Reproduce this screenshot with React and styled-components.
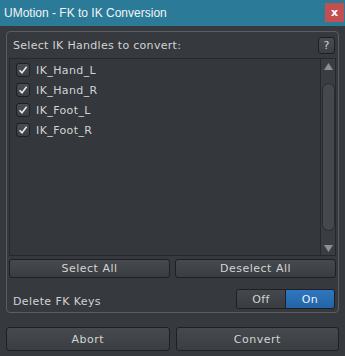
import React from "react"
import styled, { createGlobalStyle } from "styled-components"

const Global = createGlobalStyle`
  html, body {
    margin: 0;
    padding: 0;
    background: #36393d;
  }
  * { box-sizing: border-box; }
`

const Window = styled.div`
  width: 345px;
  height: 356px;
  background: #36393d;
  font-family: "DejaVu Sans", Verdana, sans-serif;
  color: #d2d4d6;
  display: flex;
  flex-direction: column;
`

const TitleBar = styled.div`
  height: 26px;
  background: #2b7b98;
  display: flex;
  align-items: flex-start;
  justify-content: space-between;
  padding: 3px 1px 0 4px;
`

const Title = styled.div`
  font-family: "Liberation Sans", Arial, sans-serif;
  font-size: 12px;
  line-height: 20px;
  color: #f2f4f5;
`

const CloseButton = styled.div`
  width: 19px;
  height: 19px;
  background: #c44f51;
  color: #fff;
  font-size: 11px;
  font-weight: bold;
  display: flex;
  align-items: center;
  justify-content: center;
  line-height: 1;
`

const Body = styled.div`
  flex: 1;
  display: flex;
  flex-direction: column;
  padding: 5px 6px 0 6px;
`

const Panel = styled.div`
  height: 282px;
  border: 1px solid #5a5d62;
  border-radius: 4px;
  padding: 3px 2px 0 2px;
  display: flex;
  flex-direction: column;
`

const PanelHeader = styled.div`
  display: flex;
  justify-content: space-between;
  align-items: center;
  height: 20px;
  padding-left: 4px;
  font-size: 11px;
  letter-spacing: 0.3px;
`

const HelpButton = styled.div`
  width: 17px;
  height: 17px;
  border: 1px solid #1e2023;
  border-radius: 3px;
  background: linear-gradient(#494c50, #3c3f43);
  font-size: 11px;
  display: flex;
  align-items: center;
  justify-content: center;
  margin-right: 1px;
`

const List = styled.div`
  margin-top: 3px;
  height: 198px;
  border: 1px solid #26282b;
  background: #34373b;
  display: flex;
`

const Items = styled.div`
  flex: 1;
  padding: 3px 0 0 6px;
  display: flex;
  flex-direction: column;
  gap: 4px;
`

const Item = styled.label`
  display: flex;
  align-items: center;
  gap: 6px;
  height: 16px;
  font-size: 11px;
  letter-spacing: 0.4px;
`

const Check = styled.span`
  width: 14px;
  height: 14px;
  border: 1px solid #1d1f22;
  border-radius: 3px;
  background: linear-gradient(#4a4d52, #3b3e42);
  display: flex;
  align-items: center;
  justify-content: center;
`

const Scrollbar = styled.div`
  width: 15px;
  border-left: 1px solid #26282b;
  background: #3a3d41;
  display: flex;
  flex-direction: column;
  align-items: center;
`

const Arrow = styled.div`
  height: 14px;
  display: flex;
  align-items: center;
  justify-content: center;
`

const Thumb = styled.div`
  flex: 1;
  width: 13px;
  margin: 10px 0 10px;
  border: 1px solid #2a2c2f;
  border-radius: 7px;
  background: #45484c;
`

const ButtonRow = styled.div`
  display: grid;
  grid-template-columns: 1fr 1fr;
  gap: ${p => p.gap || 5}px;
  margin-top: ${p => p.top || 0}px;
`

const Button = styled.div`
  height: ${p => p.h || 19}px;
  border: 1px solid #1e2023;
  border-radius: 3px;
  background: linear-gradient(#46494d, #3a3d41);
  font-size: 11px;
  letter-spacing: 0.5px;
  display: flex;
  align-items: center;
  justify-content: center;
`

const OptionRow = styled.div`
  display: flex;
  justify-content: space-between;
  align-items: center;
  margin-top: 11px;
  padding-left: 4px;
  font-size: 11px;
  letter-spacing: 0.4px;
`

const OptionLabel = styled.span`
  padding-top: 5px;
`

const Toggle = styled.div`
  display: flex;
  width: 99px;
  height: 20px;
  border: 1px solid #1d1f22;
  border-radius: 3px;
  overflow: hidden;
  margin-right: 1px;
`

const ToggleOption = styled.div`
  flex: 1;
  display: flex;
  align-items: center;
  justify-content: center;
  font-size: 11px;
  color: ${p => (p.active ? "#eaf2fa" : "#d2d4d6")};
  background: ${p =>
    p.active
      ? "linear-gradient(#2f77c0, #2463a6)"
      : "linear-gradient(#44474b, #393c40)"};
  border-left: ${p => (p.active ? "1px solid #1d1f22" : "none")};
`

const handles = ["IK_Hand_L", "IK_Hand_R", "IK_Foot_L", "IK_Foot_R"]

const Tick = () => (
  <svg width="10" height="10" viewBox="0 0 10 10">
    <path d="M1.5 5.2 L4 7.8 L8.6 1.8" stroke="#e8e8e8" strokeWidth="1.6" fill="none" />
  </svg>
)

export default function App() {
  return (
    <Window>
      <Global />
      <TitleBar>
        <Title>UMotion - FK to IK Conversion</Title>
        <CloseButton>x</CloseButton>
      </TitleBar>
      <Body>
        <Panel>
          <PanelHeader>
            Select IK Handles to convert:
            <HelpButton>?</HelpButton>
          </PanelHeader>
          <List>
            <Items>
              {handles.map(h => (
                <Item key={h}>
                  <Check>
                    <Tick />
                  </Check>
                  {h}
                </Item>
              ))}
            </Items>
            <Scrollbar>
              <Arrow>
                <svg width="9" height="7" viewBox="0 0 9 7">
                  <path d="M4.5 0 L9 7 L0 7 Z" fill="#8c8f93" />
                </svg>
              </Arrow>
              <Thumb />
              <Arrow>
                <svg width="9" height="7" viewBox="0 0 9 7">
                  <path d="M0 0 L9 0 L4.5 7 Z" fill="#8c8f93" />
                </svg>
              </Arrow>
            </Scrollbar>
          </List>
          <ButtonRow top={3} gap={5}>
            <Button>Select All</Button>
            <Button>Deselect All</Button>
          </ButtonRow>
          <OptionRow>
            <OptionLabel>Delete FK Keys</OptionLabel>
            <Toggle>
              <ToggleOption>Off</ToggleOption>
              <ToggleOption active>On</ToggleOption>
            </Toggle>
          </OptionRow>
        </Panel>
        <ButtonRow top={14} gap={6}>
          <Button h={24}>Abort</Button>
          <Button h={24}>Convert</Button>
        </ButtonRow>
      </Body>
    </Window>
  )
}
